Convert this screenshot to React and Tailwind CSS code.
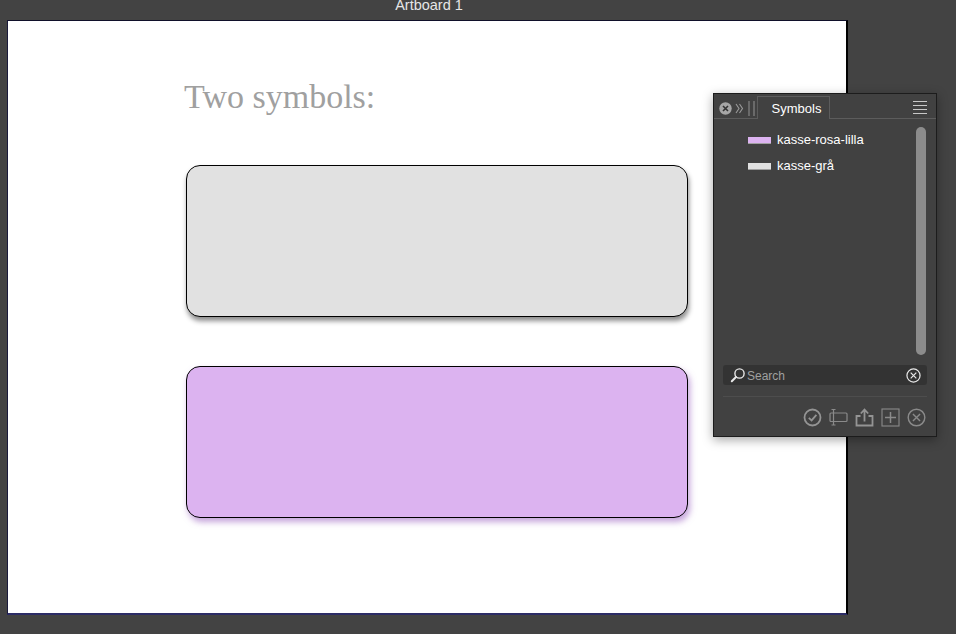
function SearchIcon() {
  return (
    <svg width="16" height="16" viewBox="0 0 16 16" fill="none" stroke="#e8e8e8">
      <circle cx="9.5" cy="6.5" r="4.6" strokeWidth="1.4" />
      <path d="M6 10 L1.8 14.2" strokeWidth="2" strokeLinecap="round" />
    </svg>
  );
}

function CircleX({ size = 16, color = "#e8e8e8", width = 1.3 }) {
  return (
    <svg width={size} height={size} viewBox="0 0 16 16" fill="none" stroke={color} strokeWidth={width}>
      <circle cx="8" cy="8" r="7" />
      <path d="M5 5 L11 11 M11 5 L5 11" />
    </svg>
  );
}

function FooterIcons() {
  return (
    <div className="flex items-center justify-end h-[20px] pr-[10px] gap-[7px]">
      <svg width="19" height="19" viewBox="0 0 19 19" fill="none" stroke="#949494" strokeWidth="1.8">
        <circle cx="9.5" cy="9.5" r="8" />
        <path d="M5.8 9.8 L8.6 12.4 L13.4 6.8" />
      </svg>
      <svg width="19" height="19" viewBox="0 0 19 19" fill="none" stroke="#8a8a8a" strokeWidth="1.2">
        <rect x="1" y="5" width="17" height="8.5" rx="1" />
        <path d="M4.5 1.5 V17 M2.5 1.5 H6.5 M2.5 17 H6.5" />
      </svg>
      <svg width="19" height="19" viewBox="0 0 19 19" fill="none" stroke="#949494" strokeWidth="1.8">
        <path d="M5.5 8 H1.5 V17.5 H17.5 V8 H13.5" />
        <path d="M9.5 13.5 V2 M5.8 5.5 L9.5 1.6 L13.2 5.5" />
      </svg>
      <svg width="19" height="19" viewBox="0 0 19 19" fill="none" stroke="#8a8a8a" strokeWidth="1.1">
        <rect x="1" y="1" width="17" height="17" />
        <path d="M9.5 4 V15 M4 9.5 H15" strokeWidth="1.5" />
      </svg>
      <CircleX size={19} color="#8a8a8a" width={1.2} />
    </div>
  );
}

function SymbolRow({ name, swatch }) {
  return (
    <div className="flex items-center h-[26px] pl-[34px] gap-[6px]">
      <div className={"w-[23px] h-[7px] border-b border-[#a0a0a0] " + swatch}></div>
      <span className="text-[13px] text-white">{name}</span>
    </div>
  );
}

function SymbolsPanel() {
  return (
    <div className="absolute left-[713px] top-[93px] w-[224px] h-[344px] bg-[#414141] border border-[#1c1c1c] shadow-[0_3px_10px_rgba(0,0,0,0.35)] flex flex-col">
      <div className="flex h-[25px] border-b border-[#5c5c5c] items-end">
        <div className="flex items-center h-[20px] pl-[5px] gap-[3px] w-[43px]">
          <svg width="13" height="13" viewBox="0 0 13 13">
            <circle cx="6.5" cy="6.5" r="6.2" fill="#a6a6a6" />
            <path d="M4 4 L9 9 M9 4 L4 9" stroke="#333333" strokeWidth="1.6" />
          </svg>
          <svg width="9" height="11" viewBox="0 0 9 11" fill="none" stroke="#9a9a9a" strokeWidth="1.1">
            <path d="M1 1 L4 5.5 L1 10 M4.5 1 L7.5 5.5 L4.5 10" />
          </svg>
          <div className="ml-[1px] w-[7px] h-[15px] border-x-2 border-[#6a6a6a]"></div>
        </div>
        <div className="h-[23px] -mb-px w-[73px] pl-[6px] pt-px bg-[#414141] border-x border-t border-[#5c5c5c] flex items-center justify-center text-[13px] text-white">
          Symbols
        </div>
        <div className="ml-auto mr-[9px] mb-[4px] w-[14px] h-[13px] flex flex-col justify-between">
          <div className="h-px bg-[#c8c8c8]"></div>
          <div className="h-px bg-[#c8c8c8]"></div>
          <div className="h-px bg-[#c8c8c8]"></div>
          <div className="h-px bg-[#c8c8c8]"></div>
        </div>
      </div>
      <div className="flex h-[246px] pt-[8px]">
        <div className="flex-1">
          <SymbolRow name="kasse-rosa-lilla" swatch="bg-[#dcb3f0]" />
          <SymbolRow name="kasse-grå" swatch="bg-[#e1e1e1]" />
        </div>
        <div className="w-[10px] h-[228px] mr-[10px] rounded-full bg-[#8c8c8c]"></div>
      </div>
      <div className="mx-[9px] h-[20px] rounded-[3px] bg-[#333333] flex items-center pl-[7px] pr-[6px]">
        <SearchIcon />
        <span className="ml-px pt-px text-[12px] text-[#a0a0a0]">Search</span>
        <div className="ml-auto">
          <CircleX size={15} />
        </div>
      </div>
      <div className="mx-[9px] mt-[11px] border-t border-[#4d4d4d]"></div>
      <div className="mt-[10px]">
        <FooterIcons />
      </div>
    </div>
  );
}

function SymbolBox({ color, shadow }) {
  return <div className={"w-[502px] h-[152px] rounded-[14px] border border-black " + color + " " + shadow}></div>;
}

export default function App() {
  return (
    <div className="relative w-[956px] h-[634px] overflow-hidden bg-[#434343] font-['Liberation_Sans',sans-serif]">
      <div className="h-[20px] w-[858px] flex justify-center text-[14.5px] leading-[10px] text-[#e6e6e6]">
        Artboard 1
      </div>
      <div className="ml-[7px] w-[841px] h-[595px] bg-white border-l border-t border-r-2 border-b-2 border-l-[#1a1a3c] border-t-[#10102a] border-r-black border-b-[#2c2c66] pl-[178px] pt-[52px]">
        <div className="-ml-[2px] font-['Liberation_Serif',serif] text-[34px] leading-[48px] text-[#a0a0a0]">
          Two symbols:
        </div>
        <div className="mt-[44px] flex flex-col gap-[49px]">
          <SymbolBox color="bg-[#e1e1e1]" shadow="shadow-[1px_4px_5px_rgba(0,0,0,0.45)]" />
          <SymbolBox color="bg-[#dcb3f0]" shadow="shadow-[2px_4px_6px_rgba(150,90,190,0.55)]" />
        </div>
      </div>
      <SymbolsPanel />
    </div>
  );
}
